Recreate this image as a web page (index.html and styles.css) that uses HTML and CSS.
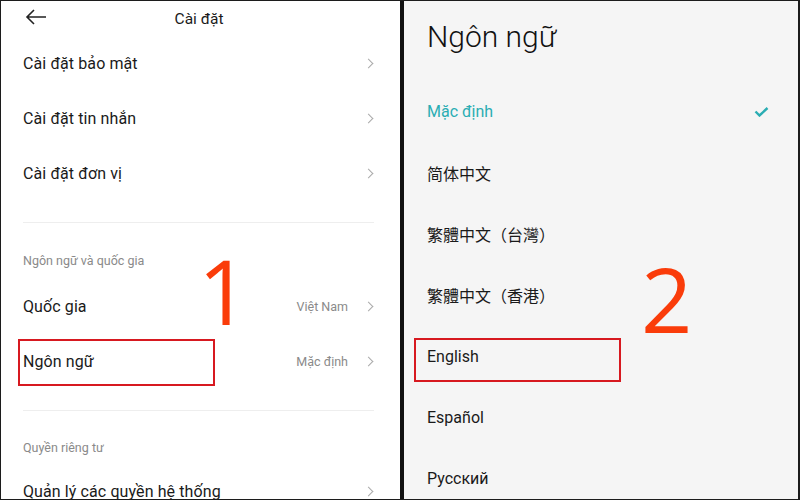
FILE: index.html
```html
<!DOCTYPE html>
<html lang='vi'>

<head>
    <meta charset='UTF-8'>
    <title>Cài đặt ngôn ngữ</title>
    <link rel="stylesheet" href="styles.css">
</head>

<body>
    <div class='frame'>
        <!-- screen 1: settings -->
        <div class='panel settings'>
            <div class='header'>
                <svg class='back' width='22' height='16' viewBox='0 0 22 16'>
                    <path d='M21 8H2M9 1L2 8l7 7' fill='none' stroke='#222' stroke-width='1.6' />
                </svg>
                <span class='title'>Cài đặt</span>
            </div>
            <div class='row'>
                <span class='label'>Cài đặt bảo mật</span>
                <span class='chevron'></span>
            </div>
            <div class='row'>
                <span class='label'>Cài đặt tin nhắn</span>
                <span class='chevron'></span>
            </div>
            <div class='row'>
                <span class='label'>Cài đặt đơn vị</span>
                <span class='chevron'></span>
            </div>
            <div class='line'></div>
            <div class='section'>Ngôn ngữ và quốc gia</div>
            <div class='row'>
                <span class='label'>Quốc gia</span>
                <span class='value'>Việt Nam</span>
                <span class='chevron'></span>
                <span class='step step-one'>1</span>
            </div>
            <div class='row'>
                <span class='label'>Ngôn ngữ</span>
                <span class='value'>Mặc định</span>
                <span class='chevron'></span>
                <span class='mark mark-left'></span>
            </div>
            <div class='line'></div>
            <div class='section last'>Quyền riêng tư</div>
            <div class='row'>
                <span class='label'>Quản lý các quyền hệ thống</span>
                <span class='chevron'></span>
            </div>
        </div>

        <div class='divider'></div>

        <!-- screen 2: language list -->
        <div class='panel languages'>
            <div class='big-title'>Ngôn ngữ</div>
            <div class='lang selected'>
                <span>Mặc định</span>
                <svg class='check' width='15' height='10' viewBox='0 0 15 10'>
                    <path d='M1.5 4.5l4 4 8-7.5' fill='none' stroke='#2aadb3' stroke-width='2.4' />
                </svg>
            </div>
            <div class='lang cjk-sc'>简体中文</div>
            <div class='lang cjk-tc'>繁體中文（台灣）</div>
            <div class='lang cjk-tc'>繁體中文（香港）
                <span class='step step-two'>2</span>
            </div>
            <div class='lang'>English
                <span class='mark mark-right'></span>
            </div>
            <div class='lang'>Español</div>
            <div class='lang'>Русский</div>
        </div>
    </div>
</body>

</html>
```

FILE: styles.css
```css
* {
    padding: 0;
    margin: 0;
    box-sizing: border-box;
}

body {
    width: 800px;
    height: 500px;
    overflow: hidden;
    font-family: Roboto, "Noto Sans", sans-serif;
    color: #1a1a1a;
}

.frame {
    width: 800px;
    height: 500px;
    display: flex;
    flex-direction: row;
    border: #1c1c1c solid 1px;
    border-right-width: 2px;
    overflow: hidden;
}

.panel {
    overflow: hidden;
}

.settings {
    width: 399px;
    background: #ffffff;
}

.divider {
    width: 4px;
    background: #111;
}

.languages {
    flex: 1;
    background: #f5f5f5;
    padding-left: 23px;
}

/* settings screen */
.header {
    height: 35px;
    display: flex;
    align-items: center;
    justify-content: center;
    position: relative;
}

.back {
    position: absolute;
    left: 24px;
    top: 8px;
}

.title {
    font-size: 15.5px;
    margin-left: -3px;
    padding-top: 1px;
}

.row {
    height: 55px;
    padding: 0 26px 0 22px;
    display: flex;
    align-items: center;
    position: relative;
}

.label {
    flex: 1;
    font-size: 16px;
    letter-spacing: 0.1px;
}

.value {
    font-size: 12.5px;
    color: #8a8a8a;
    margin-right: 17px;
}

.chevron {
    width: 7px;
    height: 7px;
    border-top: #aaa solid 1.3px;
    border-right: #aaa solid 1.3px;
    transform: rotate(45deg);
    margin-right: 2px;
}

.line {
    height: 1px;
    margin: 21px 26px 0 22px;
    background: #eeeeee;
}

.section {
    font-size: 12.5px;
    color: #8a8a8a;
    line-height: 16px;
    padding: 30px 22px 10px;
}

.section.last {
    padding: 29px 22px 8px;
}

/* language screen */
.big-title {
    height: 80px;
    font-size: 30px;
    font-weight: 300;
    padding-top: 18px;
    line-height: 36px;
    color: #111;
}

.lang {
    height: 61.2px;
    display: flex;
    align-items: center;
    font-size: 16px;
    position: relative;
    padding-right: 29px;
}

.lang span:first-child {
    flex: 1;
}

.selected {
    color: #2aadb3;
}

.cjk-sc {
    font-family: Roboto, "Noto Sans CJK SC", sans-serif;
}

.cjk-tc {
    font-family: Roboto, "Noto Sans CJK TC", sans-serif;
}

/* red annotations */
.step {
    position: absolute;
    font-family: "Open Sans", sans-serif;
    font-size: 90px;
    line-height: 1;
    color: #fa3c0a;
}

.step-one {
    left: 197px;
    top: -34px;
}

.step-two {
    left: 214px;
    top: -12px;
}

.mark {
    position: absolute;
    border: #d71920 solid 2px;
}

.mark-left {
    left: 17px;
    top: 5px;
    width: 197px;
    height: 47px;
}

.mark-right {
    left: -13px;
    top: 12px;
    width: 207px;
    height: 44px;
}
```
